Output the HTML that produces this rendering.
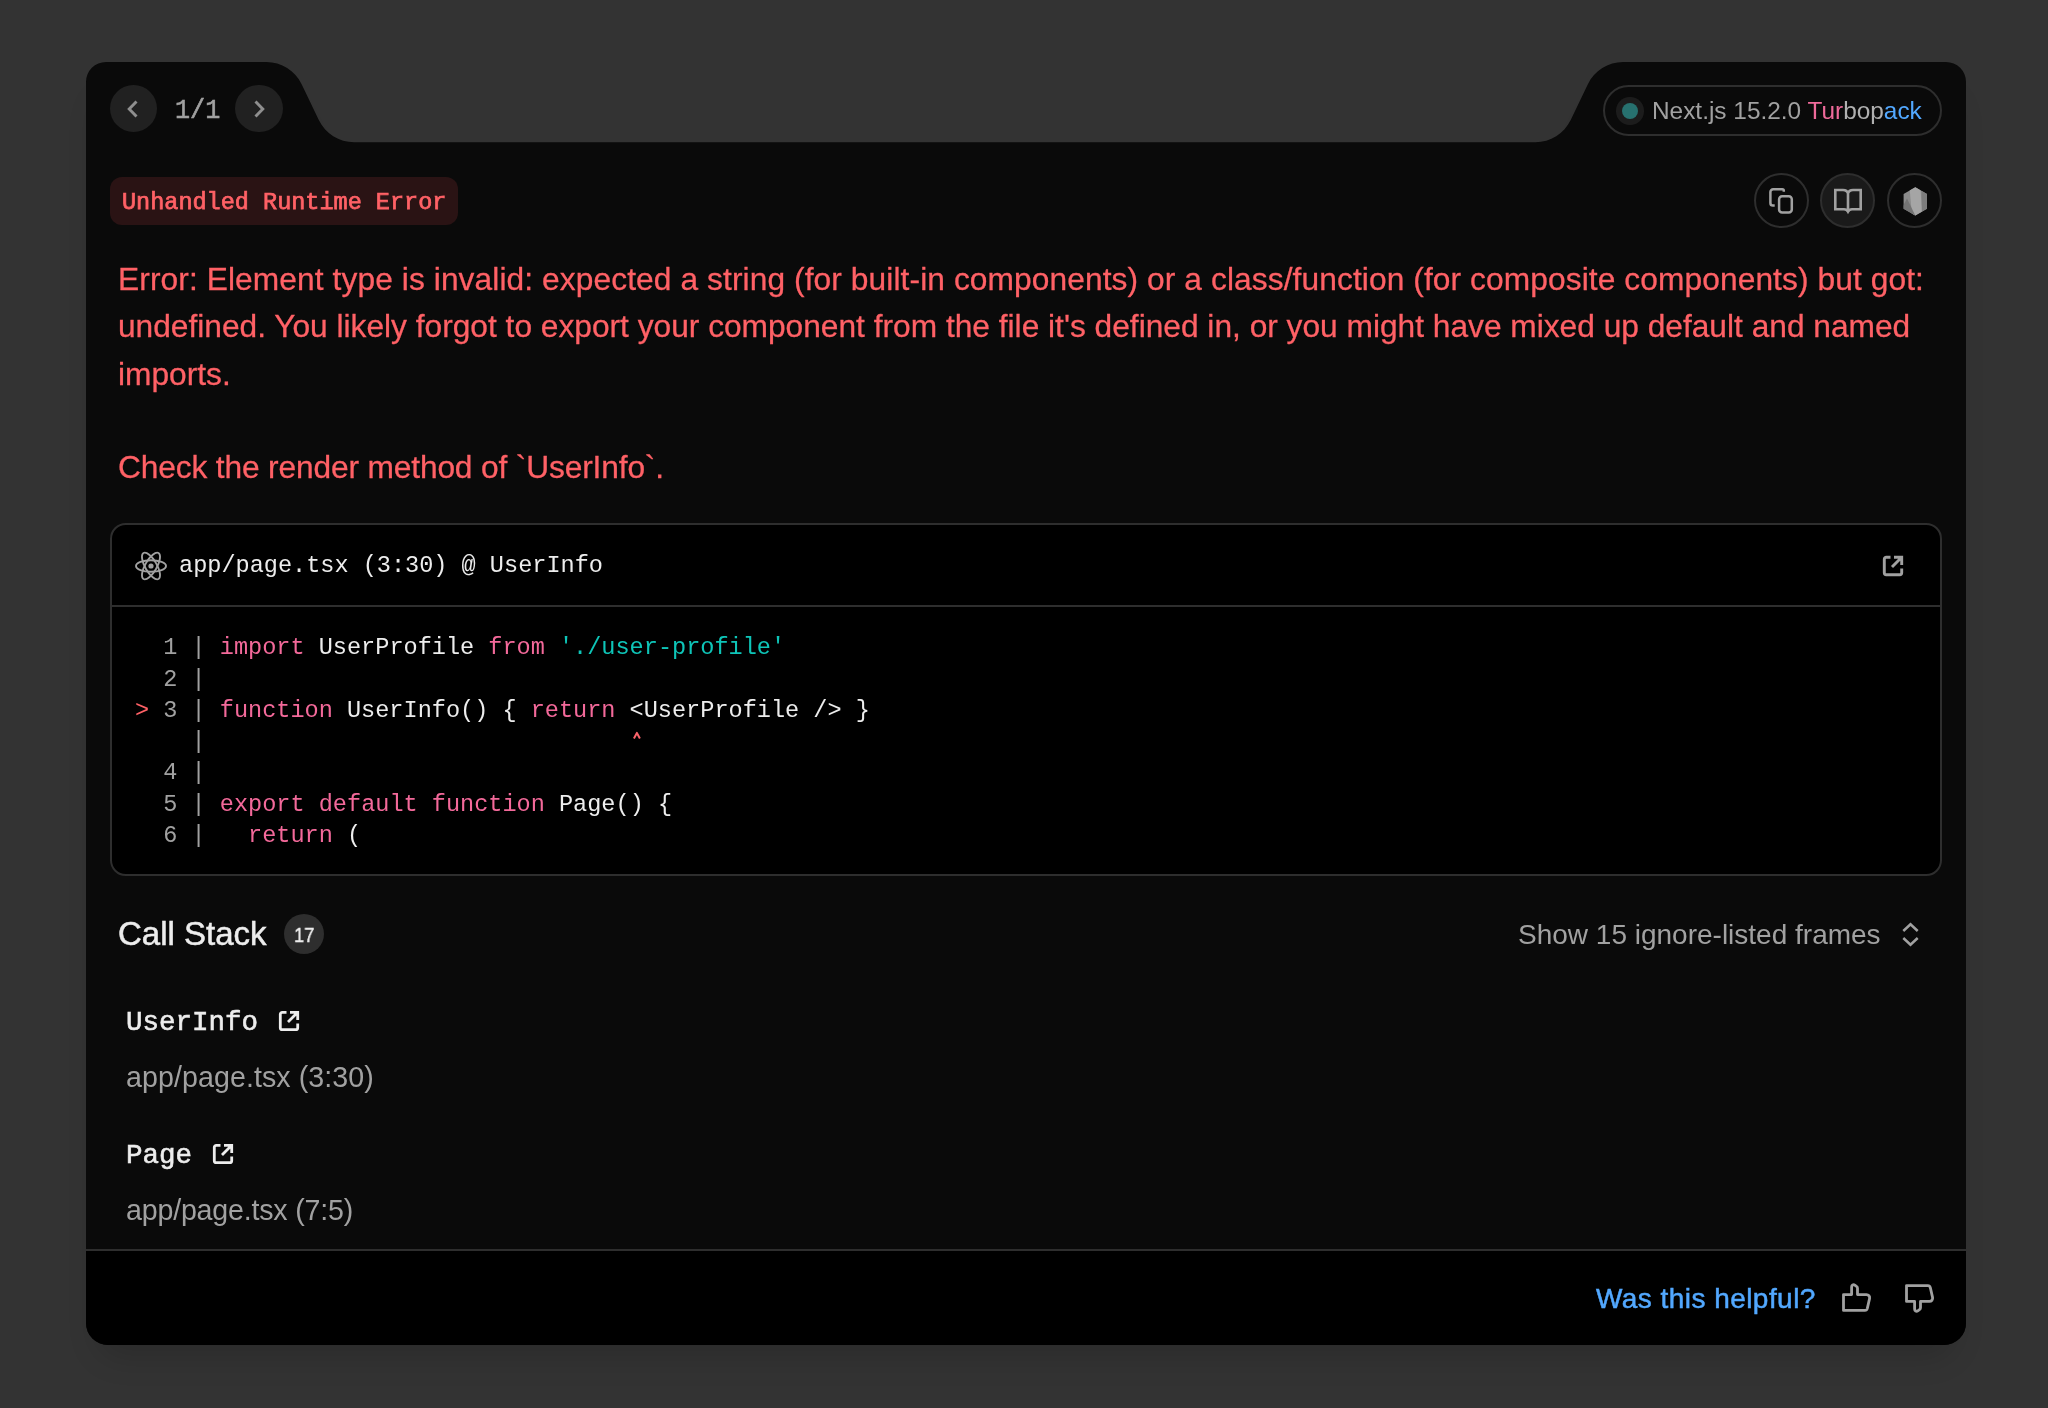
<!DOCTYPE html>
<html><head><meta charset="utf-8"><title>Unhandled Runtime Error</title>
<style>
html,body{margin:0;padding:0;}
body{width:2048px;height:1408px;background:#333333;position:relative;overflow:hidden;font-family:'Liberation Sans', sans-serif;}
.t{position:absolute;white-space:pre;will-change:transform;}
.a{position:absolute;box-sizing:border-box;}
svg{position:absolute;overflow:visible;}
</style></head><body>
<svg style="left:0;top:0" width="2048" height="1408" viewBox="0 0 2048 1408"><defs><filter id="sh" color-interpolation-filters="sRGB" x="-10%" y="-10%" width="120%" height="130%"><feMorphology in="SourceAlpha" operator="erode" radius="12"/><feGaussianBlur stdDeviation="16"/><feOffset dy="24"/><feComponentTransfer><feFuncA type="linear" slope="0.16"/></feComponentTransfer><feMerge><feMergeNode/><feMergeNode in="SourceGraphic"/></feMerge></filter></defs><path d="M86 82 A20 20 0 0 1 106 62 L266.32 62.00 C281.38 62.00 295.11 70.64 301.63 84.22 L318.81 120.05 C325.33 133.64 339.06 142.28 354.12 142.28 L1535.38 142.28 C1550.44 142.28 1564.17 133.64 1570.69 120.05 L1587.87 84.22 C1594.39 70.64 1608.12 62.00 1623.18 62.00 L1946 62 A20 20 0 0 1 1966 82 L1966 1323 A22 22 0 0 1 1944 1345 L108 1345 A22 22 0 0 1 86 1323 Z" fill="#0a0a0a" filter="url(#sh)"/></svg>
<div class="a" style="left:86px;top:1249px;width:1880px;height:96px;background:#000;border-top:2px solid #2e2e2e;border-radius:0 0 22px 22px"></div>
<div class="a" style="left:109.5px;top:85.0px;width:47.4px;height:47.4px;border-radius:50%;background:#212121"></div>
<div class="a" style="left:235.3px;top:85.0px;width:47.4px;height:47.4px;border-radius:50%;background:#212121"></div>
<svg style="left:120px;top:96px" width="26" height="26" viewBox="0 0 26 26"><path d="M16.5 5.5 L9.2 13 L16.5 20.5" fill="none" stroke="#8f8f8f" stroke-width="2.9" stroke-linecap="butt"/></svg>
<svg style="left:246px;top:96px" width="26" height="26" viewBox="0 0 26 26"><path d="M9.5 5.5 L16.8 13 L9.5 20.5" fill="none" stroke="#8f8f8f" stroke-width="2.9"/></svg>
<div class="t" style="left:174.60px;top:98.22px;font-size:25.2px;line-height:28.55px;font-family:'Liberation Mono', monospace;color:#a1a1a1;font-weight:400;transform:scaleY(1.09);transform-origin:0 20.98px;-webkit-text-stroke:0.5px #a1a1a1;">1/1</div>
<div class="a" style="left:1603px;top:85.1px;width:339px;height:50.8px;border-radius:26px;border:2px solid #2e2e2e"></div>
<div class="a" style="left:1616.3px;top:97.3px;width:27.4px;height:27.4px;border-radius:50%;background:#1c1c1c"></div>
<div class="a" style="left:1622px;top:102.5px;width:16.2px;height:16.2px;border-radius:50%;background:#27716f"></div>
<div class="t" style="left:1651.50px;top:96.91px;font-size:24.4px;line-height:27.26px;font-family:'Liberation Sans', sans-serif;color:#a1a1a1;font-weight:400;">Next.js 15.2.0 <span style="color:#ee6a9a">Tur</span><span style="color:#b0b0b0">bop</span><span style="color:#52a8ff">ack</span></div>
<div class="a" style="left:110px;top:177.3px;width:348px;height:47.3px;border-radius:12px;background:#2a1314"></div>
<div class="t" style="left:121.50px;top:189.74px;font-size:23.5px;line-height:26.62px;font-family:'Liberation Mono', monospace;color:#ff6166;font-weight:400;-webkit-text-stroke:0.75px #ff6166;">Unhandled Runtime Error</div>
<div class="a" style="left:1754.0px;top:173.4px;width:54.8px;height:54.8px;border-radius:50%;border:2px solid #2e2e2e;background:transparent"></div>
<div class="a" style="left:1820.0px;top:173.4px;width:54.8px;height:54.8px;border-radius:50%;border:2px solid #2e2e2e;background:#1a1a1a"></div>
<div class="a" style="left:1887.2px;top:173.4px;width:54.8px;height:54.8px;border-radius:50%;border:2px solid #2e2e2e;background:transparent"></div>
<svg style="left:1766px;top:185px" width="32" height="32" viewBox="0 0 32 32"><path d="M8.7 20.5 H7 a2.6 2.6 0 0 1 -2.6 -2.6 V7 a2.7 2.7 0 0 1 2.7 -2.7 H16.3 a1.5 1.5 0 0 1 1.5 1.5 V6.7" fill="none" stroke="#a1a1a1" stroke-width="2.5"/><rect x="13.1" y="11.2" width="12.7" height="16.3" rx="3" fill="none" stroke="#a1a1a1" stroke-width="2.5"/></svg>
<svg style="left:1832px;top:186px" width="32" height="30" viewBox="0 0 32 30"><path d="M3.3 4 H11 C13.5 4 15.5 5.5 16 7.5 C16.5 5.5 18.5 4 21 4 H28.7 V23.3 H20 C18 23.3 16.7 24.3 16 25.6 C15.3 24.3 14 23.3 12 23.3 H3.3 Z M16 7.5 V25" fill="none" stroke="#a1a1a1" stroke-width="2.6" stroke-linejoin="miter"/></svg>
<svg style="left:1902.5px;top:186.8px" width="25" height="29" viewBox="0 0 25 29"><defs><clipPath id="hx"><path d="M12.3 0.3 L24 7 V21.8 L12.3 28.4 L0.6 21.8 V7 Z"/></clipPath></defs><g clip-path="url(#hx)"><rect x="0" y="0" width="25" height="29" fill="#8a8a8a"/><path d="M6.5 0 H17.5 L19 29 H9 Z" fill="#a5a5a5"/><path d="M18.6 0 H25 V29 H19.2 Z" fill="#7d7d7d"/><path d="M0 19 L4 11.5 L12.5 29 H0 Z" fill="#737373"/></g></svg>
<div class="t" style="left:117.50px;top:261.90px;font-size:31.7px;line-height:35.42px;font-family:'Liberation Sans', sans-serif;color:#ff6166;font-weight:400;letter-spacing:0.1px;-webkit-text-stroke:0.3px #ff6166;">Error: Element type is invalid: expected a string (for built-in components) or a class/function (for composite components) but got:</div>
<div class="t" style="left:117.50px;top:309.30px;font-size:31.7px;line-height:35.42px;font-family:'Liberation Sans', sans-serif;color:#ff6166;font-weight:400;letter-spacing:0.0px;-webkit-text-stroke:0.3px #ff6166;">undefined. You likely forgot to export your component from the file it's defined in, or you might have mixed up default and named</div>
<div class="t" style="left:117.50px;top:356.80px;font-size:31.7px;line-height:35.42px;font-family:'Liberation Sans', sans-serif;color:#ff6166;font-weight:400;letter-spacing:0.0px;-webkit-text-stroke:0.3px #ff6166;">imports.</div>
<div class="t" style="left:117.50px;top:450.30px;font-size:31.7px;line-height:35.42px;font-family:'Liberation Sans', sans-serif;color:#ff6166;font-weight:400;letter-spacing:-0.14px;-webkit-text-stroke:0.3px #ff6166;">Check the render method of `UserInfo`.</div>
<div class="a" style="left:110px;top:522.5px;width:1832px;height:353.5px;border-radius:15.7px;border:2px solid #2e2e2e;background:#000"></div>
<div class="a" style="left:112px;top:605px;width:1828px;height:2px;background:#2e2e2e"></div>
<svg style="left:134px;top:550px" width="34" height="32" viewBox="-17 -16 34 32"><g fill="none" stroke="#a1a1a1" stroke-width="1.9"><ellipse rx="15" ry="5.8"/><ellipse rx="15" ry="5.8" transform="rotate(60)"/><ellipse rx="15" ry="5.8" transform="rotate(120)"/></g><circle r="2.6" fill="#a1a1a1"/></svg>
<div class="t" style="left:179.00px;top:552.89px;font-size:23.55px;line-height:26.68px;font-family:'Liberation Mono', monospace;color:#ededed;font-weight:400;">app/page.tsx (3:30) @ UserInfo</div>
<svg style="left:1883px;top:555.8px" width="20" height="20" viewBox="0 0 20 20"><path d="M7.5 1.3 H3.3 a2 2 0 0 0 -2 2 V16.7 a2 2 0 0 0 2 2 H16.7 a2 2 0 0 0 2 -2 V12.5" fill="none" stroke="#a1a1a1" stroke-width="2.9"/><path d="M11 1.3 H18.7 V9 M18.7 1.3 L9 11" fill="none" stroke="#a1a1a1" stroke-width="2.9"/></svg>
<div class="t" style="left:135.20px;top:635.29px;font-size:23.55px;line-height:26.68px;font-family:'Liberation Mono', monospace;color:#ededed;font-weight:400;"><span style="color:#a1a1a1">  1 | </span><span style="color:#f3699a">import</span><span style="color:#ededed"> UserProfile </span><span style="color:#f3699a">from</span><span style="color:#ededed"> </span><span style="color:#0ec5b8">'./user-profile'</span></div>
<div class="t" style="left:135.20px;top:666.56px;font-size:23.55px;line-height:26.68px;font-family:'Liberation Mono', monospace;color:#ededed;font-weight:400;"><span style="color:#a1a1a1">  2 |</span></div>
<div class="t" style="left:135.20px;top:697.83px;font-size:23.55px;line-height:26.68px;font-family:'Liberation Mono', monospace;color:#ededed;font-weight:400;"><span style="color:#ff6166">></span><span style="color:#a1a1a1"> 3 | </span><span style="color:#f3699a">function</span><span style="color:#ededed"> UserInfo() { </span><span style="color:#f3699a">return</span><span style="color:#ededed"> &lt;UserProfile /> }</span></div>
<div class="t" style="left:135.20px;top:729.10px;font-size:23.55px;line-height:26.68px;font-family:'Liberation Mono', monospace;color:#ededed;font-weight:400;"><span style="color:#a1a1a1">    |</span></div>
<div class="t" style="left:135.20px;top:760.37px;font-size:23.55px;line-height:26.68px;font-family:'Liberation Mono', monospace;color:#ededed;font-weight:400;"><span style="color:#a1a1a1">  4 |</span></div>
<div class="t" style="left:135.20px;top:791.64px;font-size:23.55px;line-height:26.68px;font-family:'Liberation Mono', monospace;color:#ededed;font-weight:400;"><span style="color:#a1a1a1">  5 | </span><span style="color:#f3699a">export</span><span style="color:#ededed"> </span><span style="color:#f3699a">default</span><span style="color:#ededed"> </span><span style="color:#f3699a">function</span><span style="color:#ededed"> Page() {</span></div>
<div class="t" style="left:135.20px;top:822.91px;font-size:23.55px;line-height:26.68px;font-family:'Liberation Mono', monospace;color:#ededed;font-weight:400;"><span style="color:#a1a1a1">  6 | </span><span style="color:#ededed">  </span><span style="color:#f3699a">return</span><span style="color:#ededed"> (</span></div>
<svg style="left:626px;top:726px" width="20" height="16" viewBox="0 0 20 16"><path d="M7.9 12.4 L10.9 6.9 L13.9 12.4" fill="none" stroke="#f9636a" stroke-width="2" stroke-linejoin="round"/></svg>
<div class="t" style="left:117.50px;top:915.63px;font-size:33.0px;line-height:36.87px;font-family:'Liberation Sans', sans-serif;color:#ededed;font-weight:400;letter-spacing:0px;-webkit-text-stroke:0.5px #ededed;">Call Stack</div>
<div class="a" style="left:284px;top:914.3px;width:40px;height:40px;border-radius:50%;background:#2e2e2e"></div>
<div class="t" style="left:294.00px;top:923.19px;font-size:21.0px;line-height:23.46px;font-family:'Liberation Sans', sans-serif;color:#ededed;font-weight:400;transform:scaleX(0.87);transform-origin:0 0;-webkit-text-stroke:0.45px #ededed;">17</div>
<div class="t" style="left:1517.50px;top:918.75px;font-size:28.0px;line-height:31.28px;font-family:'Liberation Sans', sans-serif;color:#a1a1a1;font-weight:400;">Show 15 ignore-listed frames</div>
<svg style="left:1898px;top:920px" width="26" height="30" viewBox="0 0 26 30"><path d="M5.3 11 L12.5 4.3 L19.7 11 M5.3 18 L12.5 24.7 L19.7 18" fill="none" stroke="#a1a1a1" stroke-width="2.5"/></svg>
<div class="t" style="left:125.50px;top:1006.81px;font-size:27.5px;line-height:31.15px;font-family:'Liberation Mono', monospace;color:#ededed;font-weight:400;-webkit-text-stroke:0.6px #ededed;">UserInfo</div>
<svg style="left:278.5px;top:1010.9px" width="20" height="20" viewBox="0 0 20 20"><path d="M7.5 1.3 H3.3 a2 2 0 0 0 -2 2 V16.7 a2 2 0 0 0 2 2 H16.7 a2 2 0 0 0 2 -2 V12.5" fill="none" stroke="#ededed" stroke-width="2.8"/><path d="M11 1.3 H18.7 V9 M18.7 1.3 L9 11" fill="none" stroke="#ededed" stroke-width="2.8"/></svg>
<div class="t" style="left:125.50px;top:1061.91px;font-size:28.6px;line-height:31.95px;font-family:'Liberation Sans', sans-serif;color:#a1a1a1;font-weight:400;letter-spacing:0.08px;">app/page.tsx (3:30)</div>
<div class="t" style="left:125.50px;top:1140.11px;font-size:27.5px;line-height:31.15px;font-family:'Liberation Mono', monospace;color:#ededed;font-weight:400;-webkit-text-stroke:0.6px #ededed;">Page</div>
<svg style="left:212.7px;top:1144.0px" width="20" height="20" viewBox="0 0 20 20"><path d="M7.5 1.3 H3.3 a2 2 0 0 0 -2 2 V16.7 a2 2 0 0 0 2 2 H16.7 a2 2 0 0 0 2 -2 V12.5" fill="none" stroke="#ededed" stroke-width="2.8"/><path d="M11 1.3 H18.7 V9 M18.7 1.3 L9 11" fill="none" stroke="#ededed" stroke-width="2.8"/></svg>
<div class="t" style="left:125.50px;top:1194.81px;font-size:28.6px;line-height:31.95px;font-family:'Liberation Sans', sans-serif;color:#a1a1a1;font-weight:400;letter-spacing:-0.19px;">app/page.tsx (7:5)</div>
<div class="t" style="left:1596.00px;top:1282.65px;font-size:28.0px;line-height:31.28px;font-family:'Liberation Sans', sans-serif;color:#52a8ff;font-weight:400;letter-spacing:0.45px;-webkit-text-stroke:0.5px #52a8ff;">Was this helpful?</div>
<svg style="left:1840px;top:1282px" width="34" height="32" viewBox="0 0 34 32"><path d="M3.5 12.6 H11.6 V5 C11.6 3.2 13.3 2.2 14.8 3.2 L16.5 4.4 C17.1 4.8 17.5 5.5 17.5 6.2 V12.6 H26.5 C28.5 12.6 30 14.4 29.6 16.4 L27.3 26.5 C27 27.6 26 28.4 24.9 28.4 H3.5 Z" fill="none" stroke="#a1a1a1" stroke-width="2.8" stroke-linejoin="round"/></svg>
<svg style="left:1902.9px;top:1282.1px" width="34" height="32" viewBox="0 0 34 32"><g transform="translate(0,32) scale(1,-1)"><path d="M3.5 12.6 H11.6 V5 C11.6 3.2 13.3 2.2 14.8 3.2 L16.5 4.4 C17.1 4.8 17.5 5.5 17.5 6.2 V12.6 H26.5 C28.5 12.6 30 14.4 29.6 16.4 L27.3 26.5 C27 27.6 26 28.4 24.9 28.4 H3.5 Z" fill="none" stroke="#a1a1a1" stroke-width="2.8" stroke-linejoin="round"/></g></svg>
</body></html>
